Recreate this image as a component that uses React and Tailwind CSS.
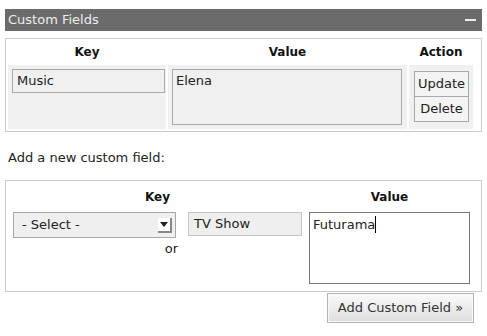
const App = () => {
    return (
        <div
            className="w-[487px] h-[336px] bg-white text-[13px] text-[#222] overflow-hidden"
            style={{ fontFamily: '"DejaVu Sans", Verdana, sans-serif' }}
        >
            <div className="mx-[5px] pt-[9px]">
                {/* header bar */}
                <div className="h-[22px] bg-[#6b6b6b] flex items-center justify-between pl-[3px] pr-[6px]">
                    <span className="text-[13px] text-[#eeeeee]">Custom Fields</span>
                    <span className="block w-[11px] h-[2px] bg-[#eeeeee]"></span>
                </div>

                {/* existing fields */}
                <div className="mt-[7px] border border-[#cccccc] h-[94px] px-[2px]">
                    <div className="flex h-[26px] items-center text-[12px] font-bold text-[#111]">
                        <div className="w-[158px] text-center">Key</div>
                        <div className="w-[239px] ml-[2px] text-center">Value</div>
                        <div className="w-[64px] ml-[2px] text-center">Action</div>
                    </div>
                    <div className="flex h-[64px]">
                        <div className="w-[158px] bg-[#f0f0f0] pt-[4px] pl-[4px]">
                            <div className="w-[153px] h-[24px] border border-[#a9a9a9] bg-[#f0f0f0] px-[4px] pt-[3px] leading-[16px]">
                                Music
                            </div>
                        </div>
                        <div className="w-[239px] ml-[2px] bg-[#f0f0f0] pt-[4px] pl-[4px]">
                            <div className="w-[230px] h-[56px] border border-[#a9a9a9] bg-[#f0f0f0] px-[3px] pt-[3px] leading-[16px]">
                                Elena
                            </div>
                        </div>
                        <div className="w-[64px] ml-[2px] bg-[#f0f0f0] pt-[6px] pl-[5px]">
                            <div className="w-[55px] h-[26px] border border-[#a9a9a9] bg-[#f4f4f4] flex items-center justify-center">
                                Update
                            </div>
                            <div className="w-[55px] h-[25px] border border-t-0 border-[#a9a9a9] bg-[#f4f4f4] flex items-center justify-center">
                                Delete
                            </div>
                        </div>
                    </div>
                </div>

                <div className="mt-[18px] pl-[3px] leading-[16px] text-[#222]">Add a new custom field:</div>

                {/* new field */}
                <div className="mt-[14px] border border-[#cccccc] h-[112px] pl-[7px] pr-[5px] flex">
                    <div className="w-[289px]">
                        <div className="h-[31px] flex items-center justify-center text-[12px] font-bold text-[#111]">Key</div>
                        <div className="flex">
                            <div className="w-[165px]">
                                <div className="w-[163px] h-[26px] border border-[#a9a9a9] bg-[#efefef] flex items-center justify-between pl-[8px] pr-[3px]">
                                    <span>- Select -</span>
                                    <span className="w-[14px] h-[15px] bg-white border-r-2 border-b-2 border-[#888] flex items-center justify-center">
                                        <svg width="8" height="5" viewBox="0 0 8 5">
                                            <path d="M0 0 L8 0 L4 5 Z" fill="#222" />
                                        </svg>
                                    </span>
                                </div>
                                <div className="text-right mt-[1px]">or</div>
                            </div>
                            <div className="ml-[10px] w-[114px] h-[24px] border border-[#c4c4c4] bg-[#efefef] px-[5px] pt-[3px] leading-[16px]">
                                TV Show
                            </div>
                        </div>
                    </div>
                    <div className="ml-[7px] w-[161px]">
                        <div className="h-[31px] flex items-center justify-center text-[12px] font-bold text-[#111]">Value</div>
                        <div className="w-[161px] h-[72px] border border-[#777] bg-white px-[3px] pt-[3px] leading-[17px] flex items-start">
                            <span>Futurama</span>
                            <span className="inline-block w-[1px] h-[17px] bg-black"></span>
                        </div>
                    </div>
                </div>

                <div className="flex justify-end pr-[2px] mt-[1px]">
                    <div className="w-[147px] h-[30px] mr-[6px] border border-[#b5b5b5] bg-gradient-to-b from-[#fafafa] to-[#dedede] shadow-[inset_0_0_0_1px_#f7f7f7] flex items-center justify-center text-[13px] text-[#333]">
                        Add Custom Field »
                    </div>
                </div>
            </div>
        </div>
    );
};

export default App;
